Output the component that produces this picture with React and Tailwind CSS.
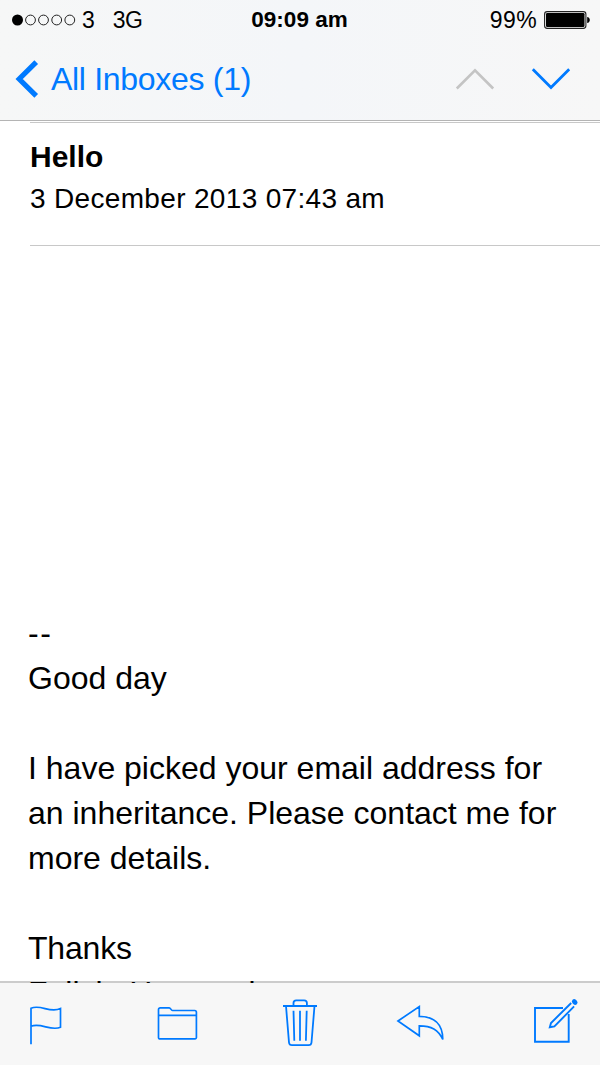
import React from 'react';

const BLUE = '#007aff'

function StatusBar() {
  return (
    <div className="h-10 flex items-center justify-between pl-3 pr-[10px] text-[23px] leading-10">
      <div className="flex-1 flex items-center">
        <svg width="64" height="12" viewBox="0 0 64 12">
          <circle cx="5.5" cy="6" r="5.5" fill="#000" />
          {[18.5, 31.5, 44.7, 57.8].map((cx) => (
            <circle key={cx} cx={cx} cy="6" r="4.9" fill="none" stroke="#222" strokeWidth="1" />
          ))}
        </svg>
        <span className="ml-[6px]">3</span>
        <span className="ml-[18px] tracking-[-0.5px]">3G</span>
      </div>
      <div className="font-bold text-[22.5px] mr-[3px]">09:09 am</div>
      <div className="flex-1 flex items-center justify-end gap-[7px]">
        <span className="tracking-[0.4px]">99%</span>
        <svg width="46" height="18" viewBox="0 0 46 18">
          <rect x=".6" y=".6" width="41.3" height="16.8" rx="2.6" fill="none" stroke="#222" strokeWidth="1.1" />
          <rect x="2" y="2" width="38.5" height="14" rx="1.2" fill="#000" />
          <path d="M43.2 6v6c1.6-.3 2.6-1.4 2.6-3s-1-2.7-2.6-3z" fill="#000" />
        </svg>
      </div>
    </div>
  )
}

function NavBar() {
  return (
    <div className="h-[78px] flex items-center justify-between pl-[15px] pr-[29px]">
      <button className="flex items-center text-[#007aff]">
        <svg width="24" height="38" viewBox="0 0 24 38" fill="none" stroke={BLUE} strokeWidth="5.2">
          <path d="M21.2 2.2 4.2 19l17 16.8" />
        </svg>
        <span className="ml-3 text-[32px] leading-[38px] tracking-[-0.3px]">All Inboxes (1)</span>
      </button>
      <div className="flex items-center gap-[36px]">
        <svg width="40" height="24" viewBox="0 0 40 24" fill="none" stroke="#c4c4c4" strokeWidth="2.6">
          <path d="M1.8 21.5 20 3.300 38.200 21.500" />
        </svg>
        <svg width="40" height="24" viewBox="0 0 40 24" fill="none" stroke={BLUE} strokeWidth="2.8">
          <path d="M1.8 2.3 20 20.5 38.2 2.3" />
        </svg>
      </div>
    </div>
  )
}

function Toolbar() {
  return (
    <footer className="relative h-[84px] shrink-0 border-t-2 border-black/20 bg-[#f7f7f7] bg-clip-padding flex items-start pl-[29px] pt-[13px]">
      {/* Flag */}
      <svg width="34" height="52" viewBox="29 996 34 52" fill="none" stroke={BLUE} strokeWidth="1.7">
        <path d="M31 1044.2v-36c10-4.3 19 5.5 29.5.3v18.8c-10 4.2-19.5-5-29.5-1" />
      </svg>
      {/* Folder */}
      <svg className="ml-[93px]" width="42" height="52" viewBox="156 996 42 52" fill="none" stroke={BLUE} strokeWidth="1.7">
        <path d="M158.5 1037.5v-28a1.700 1.700 0 0 1 1.700-1.700h9c1.600 0 1.700 2.700 3.300 2.700h22.200a1.700 1.700 0 0 1 1.700 1.700v25.300a1.400 1.400 0 0 1-1.400 1.400H160a1.400 1.400 0 0 1-1.500-1.400zM158.500 1015.300h38" />
      </svg>
      {/* Trash */}
      <svg className="ml-[84px]" width="36" height="52" viewBox="282 996 36 52" fill="none" stroke={BLUE} strokeWidth="1.8">
        <path d="M283 1006h34M293.5 1006v-3a2.700 2.700 0 0 1 2.700-2.700h8a2.700 2.700 0 0 1 2.700 2.700v3M286 1006l3 36.500a3 3 0 0 0 3 2.700h16.500a3 3 0 0 0 3-2.700l3-36.500M293.500 1010.700l.8 30M300 1010.700v30M306.700 1010.700l-.8 30" />
      </svg>
      {/* Reply */}
      <svg className="ml-[77px]" width="50" height="52" viewBox="395 996 50 52" fill="none" stroke={BLUE} strokeWidth="1.7">
        <path d="M398 1021l21.300-14.500v9.800c14 0 23.500 7.200 23.500 23.200-4.500-10-11.500-13.700-23.500-13.700v10z" />
      </svg>
      {/* Compose */}
      <svg className="ml-[88px]" width="46" height="52" viewBox="533 996 46 52" fill="none" stroke={BLUE} strokeWidth="1.9">
        <path d="M563 1008h-28v33.700h33.700V1014" />
        <path d="M571.200 1003l-20.200 20-1.200 4.200 4.600-.8 19.700-20" />
        <path d="M574.200 1001.500l1 1" strokeWidth="4.600" strokeLinecap="round" />
      </svg>
    </footer>
  )
}

export default function App() {
  return (
    <div className="w-[600px] h-[1065px] overflow-hidden flex flex-col bg-white text-black font-['Liberation_Sans',Arial,sans-serif]">
      <header className="h-[121px] shrink-0 bg-gradient-to-r from-[#f6f7f7] via-[#f4f6f9] to-[#f7f7f7] border-b border-[#b4b4b4]">
        <StatusBar />
        <NavBar />
      </header>

      <main className="flex-1 min-h-0 overflow-hidden pt-px -mb-0.5">
        <section className="ml-[30px] h-[124px] border-y border-[#c8c8c8] pt-[15px]">
          <h1 className="text-[30px] leading-[38px] font-bold">Hello</h1>
          <p className="mt-1 text-[28px] leading-[38px] tracking-[0.33px]">3 December 2013 07:43 am</p>
        </section>

        <article className="ml-[28px] mt-[365px] text-[32px] leading-[45px] whitespace-nowrap">
          <p className="tracking-[1.5px]">--</p>
          <p>Good day</p>
          <p className="mt-[45px]">I have picked your email address for</p>
          <p>an inheritance. Please contact me for</p>
          <p>more details.</p>
          <p className="mt-[45px] tracking-[-0.2px]">Thanks</p>
          <p>Felicia Hayward</p>
        </article>
      </main>

      <Toolbar />
    </div>
  )
}
